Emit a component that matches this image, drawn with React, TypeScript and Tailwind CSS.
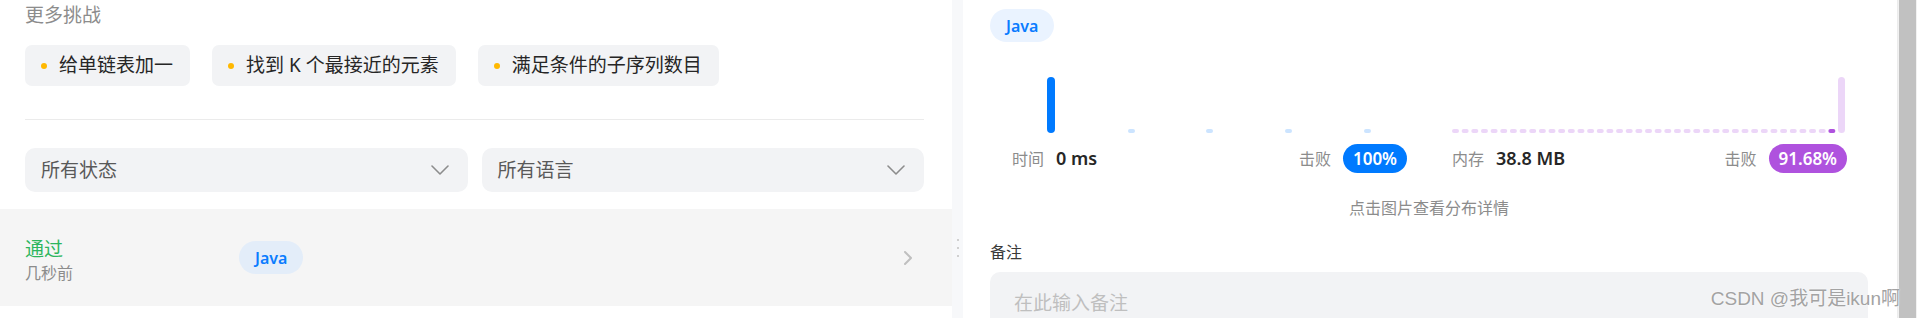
const chips = ["给单链表加一", "找到 K 个最接近的元素", "满足条件的子序列数目"];

function ChevronDown() {
  return (
    <svg width="18" height="10" viewBox="0 0 18 10" fill="none">
      <polyline points="1,1 9,9 17,1" stroke="#8c8c8c" strokeWidth="1.6" strokeLinecap="round" strokeLinejoin="round" />
    </svg>
  );
}

function Select({ label }: { label: string }) {
  return (
    <div className="flex h-[44px] items-center justify-between rounded-[10px] bg-[#f2f3f5] pl-[16px] pr-[19px]">
      <span className="text-[19px] leading-[28px] text-[#595959]">{label}</span>
      <ChevronDown />
    </div>
  );
}

function Chart() {
  const purple = Array.from({ length: 41 }, (_, i) => i);
  return (
    <svg width="878" height="66" viewBox="0 0 878 66" className="mt-[28px] block">
      <rect x="57" y="7" width="8" height="56" rx="4" fill="#007aff" />
      {[138, 216, 295, 374].map((x) => (
        <rect key={x} x={x} y="59" width="7" height="4" rx="2" fill="#cce4ff" />
      ))}
      {purple.map((i) => {
        const x = 462 + i * 9.65;
        if (i === 40) return <rect key={i} x={x} y="7" width="7" height="56" rx="3.5" fill="#ecd6f8" />;
        return <rect key={i} x={x} y="59" width="7" height="4" rx="2" fill={i === 39 ? "#af52de" : "#ecd6f8"} />;
      })}
    </svg>
  );
}

function Stat({ label, value, pct, pill }: { label: string; value: string; pct: string; pill: string }) {
  return (
    <div className="flex h-[29px] items-center justify-between">
      <div className="flex items-center gap-[12px]">
        <span className="text-[16px] text-[#8c8c8c]">{label}</span>
        <span className="text-[18px] font-semibold text-[#262626]">{value}</span>
      </div>
      <div className="flex items-center gap-[12px]">
        <span className="text-[16px] text-[#8c8c8c]">击败</span>
        <span className={`flex h-[29px] items-center rounded-full px-[10px] text-[17px] font-semibold text-white ${pill}`}>
          {pct}
        </span>
      </div>
    </div>
  );
}

export default function App() {
  return (
    <div className="relative flex h-[318px] w-full overflow-hidden bg-white font-['Noto_Sans','Noto_Sans_CJK_SC',sans-serif]">
      {/* left: more challenges + submissions */}
      <div className="w-[952px] shrink-0">
        <div className="pl-[25px] pr-[28px]">
          <div className="pt-[1px] text-[19px] leading-[28px] text-[#8c8c8c]">更多挑战</div>
          <div className="mt-[16px] flex gap-[22px]">
            {chips.map((c) => (
              <div key={c} className="flex h-[41px] items-center gap-[12px] rounded-[7px] bg-[#f2f3f5] pl-[16px] pr-[17px]">
                <span className="h-[6px] w-[6px] rounded-full bg-[#ffb800]" />
                <span className="text-[19px] text-[#262626]">{c}</span>
              </div>
            ))}
          </div>
          <div className="mt-[33px] h-px bg-[#ebebeb]" />
          <div className="mt-[28px] grid grid-cols-2 gap-[14px]">
            <Select label="所有状态" />
            <Select label="所有语言" />
          </div>
        </div>
        <div className="mt-[17px] flex h-[97px] items-center bg-[#f5f5f5] pl-[25px] pr-[39px]">
          <div className="mt-[4px] w-[214px]">
            <div className="text-[19px] leading-[26px] text-[#2db55d]">通过</div>
            <div className="text-[16px] leading-[22px] text-[#8c8c8c]">几秒前</div>
          </div>
          <span className="flex h-[33px] items-center rounded-full bg-[#e3edf9] px-[16px] text-[16px] font-semibold text-[#0a7cff]">
            Java
          </span>
          <svg className="ml-auto" width="10" height="16" viewBox="0 0 10 16" fill="none">
            <polyline points="2,2 8,8 2,14" stroke="#bfbfbf" strokeWidth="2" strokeLinecap="round" strokeLinejoin="round" />
          </svg>
        </div>
      </div>

      {/* resize handle */}
      <div className="flex w-[11px] shrink-0 flex-col items-center bg-[#f7f8fa] pt-[239px]">
        <div className="flex flex-col gap-[6px] pl-[1px]">
          <span className="h-[2px] w-[2px] bg-[#d0d0d0]" />
          <span className="h-[2px] w-[2px] bg-[#d0d0d0]" />
          <span className="h-[2px] w-[2px] bg-[#d0d0d0]" />
        </div>
      </div>

      {/* right: result detail */}
      <div className="min-w-0 flex-1 pl-[27px] pr-[29px] pt-[9px]">
        <span className="inline-flex h-[33px] items-center rounded-full bg-[#eaf3ff] px-[16px] text-[16px] font-semibold text-[#0a7cff]">
          Java
        </span>
        <Chart />
        <div className="mt-[8px] grid grid-cols-2 gap-[45px] pl-[22px] pr-[21px]">
          <Stat label="时间" value="0 ms" pct="100%" pill="bg-[#007aff]" />
          <Stat label="内存" value="38.8 MB" pct="91.68%" pill="bg-[#af52de]" />
        </div>
        <div className="mt-[23px] text-center text-[16px] leading-[24px] text-[#8c8c8c]">点击图片查看分布详情</div>
        <div className="mt-[20px] text-[16px] leading-[24px] text-[#3a3a3a]">备注</div>
        <div className="mt-[8px] h-[80px] rounded-[10px] bg-[#f2f3f5] pl-[24px] pt-[17px] text-[19px] leading-[28px] text-[#bfbfbf]">
          在此输入备注
        </div>
      </div>

      {/* scrollbar */}
      <div className="w-[20px] shrink-0 border-l border-[#ececec] bg-[#f1f1f1]">
        <div className="ml-[1px] h-full w-[17px] bg-[#c1c1c1]" />
      </div>

      <div className="absolute bottom-[7px] right-[17px] font-['Liberation_Sans','Noto_Sans_CJK_SC',sans-serif] text-[19px] leading-[24px] text-[#a3a3a3] [text-shadow:0_0_2px_#fff]">
        CSDN @我可是ikun啊
      </div>
    </div>
  );
}
